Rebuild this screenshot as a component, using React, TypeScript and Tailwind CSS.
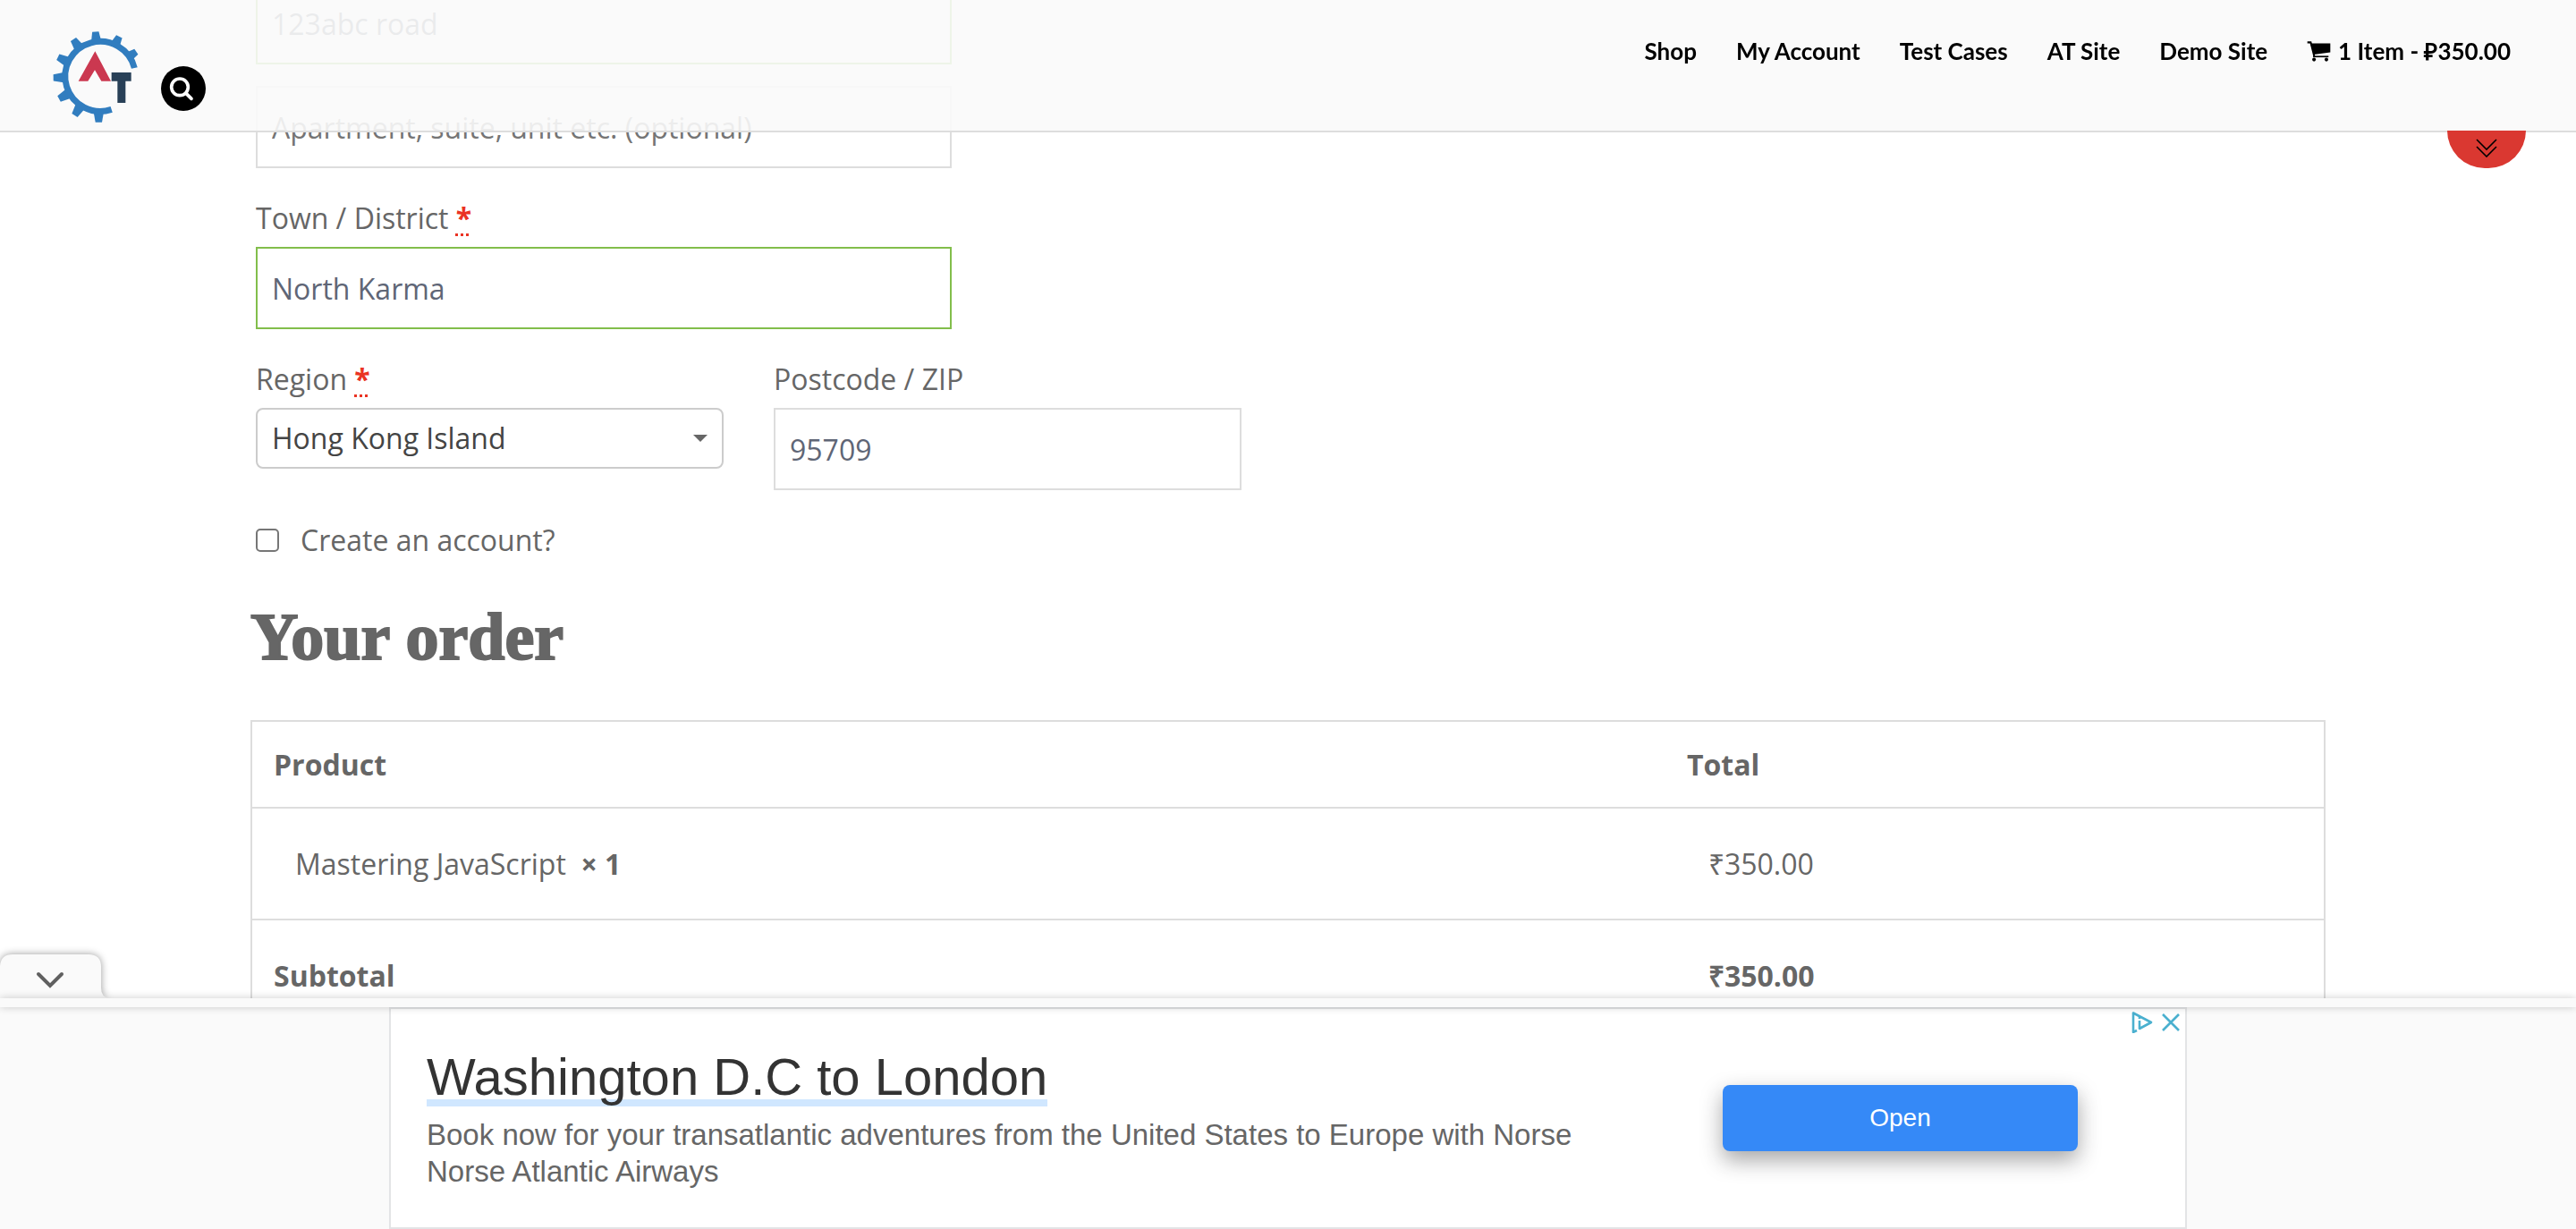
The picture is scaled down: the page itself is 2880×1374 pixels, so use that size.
import React from "react";

const GEAR_TEETH = [-180, -148, -119, -91, -64, -34, -4, 27, 56];

function Logo() {
  return (
    <svg viewBox="25 30 300 306" className="h-[102px] w-[100px]" aria-hidden="true">
      <g fill="#317dbf">
        {GEAR_TEETH.map((angle) => (
          <path
            key={angle}
            transform={`rotate(${angle} 182 183)`}
            d="M171 31h22l6 34h-34z"
          />
        ))}
      </g>
      <path
        d="M302 153A118 117 0 1 0 225 292"
        fill="none"
        stroke="#317dbf"
        strokeWidth="21"
      />
      <path d="M170 97L223 197H191L169 160L146 197H114Z" fill="#cb3850" />
      <path d="M225 168H291V197H272V270H245V197H225Z" fill="#284057" />
    </svg>
  );
}

function CartIcon() {
  return (
    <svg viewBox="32 50 80 68" className="h-[23px] w-[27px]" aria-hidden="true">
      <path d="M34 54H45L57 101" fill="none" stroke="#000" strokeWidth="6" />
      <path d="M45 57H110V87L55 94Z" fill="#000" />
      <path d="M53 101H104" stroke="#000" strokeWidth="5" />
      <circle cx="56" cy="111" r="6" />
      <circle cx="97" cy="111" r="6" />
    </svg>
  );
}

const NAV_LINKS = ["Shop", "My Account", "Test Cases", "AT Site", "Demo Site"];

function Header() {
  return (
    <header className="fixed inset-x-0 top-0 z-20 flex h-[148px] items-start justify-between border-b-2 border-[#dddddd] bg-[#fafafa]/90 pr-[73px] pl-[58px]">
      <div className="flex items-start gap-[22px]">
        <a href="#home" aria-label="Home" className="mt-[35px] block">
          <Logo />
        </a>
        <button
          type="button"
          aria-label="Search"
          className="mt-[74px] flex size-[50px] items-center justify-center rounded-full bg-black"
        >
          <svg viewBox="390 147 150 150" className="size-[50px]" fill="none" stroke="#fff" strokeWidth="11">
            <circle cx="453" cy="217" r="28" />
            <path d="M474 238L492 256" strokeLinecap="round" />
          </svg>
        </button>
      </div>
      <nav className="mt-[37px] flex items-center gap-11 font-['Lato',sans-serif] text-[26px] leading-[40px] font-bold text-black">
        {NAV_LINKS.map((label) => (
          <a key={label} href="#nav">
            {label}
          </a>
        ))}
        <a href="#cart" className="flex items-center gap-2">
          <CartIcon />
          1 Item - ₽350.00
        </a>
      </nav>
    </header>
  );
}

function SubmenuTab() {
  return (
    <button
      type="button"
      aria-label="Show menu"
      className="fixed top-[146px] right-[56px] z-30 flex h-[42px] w-[88px] justify-center rounded-b-full bg-[#da3831] pt-[9px]"
    >
      <svg viewBox="0 0 24 21" className="h-[21px] w-[24px]" fill="none" stroke="#000" strokeWidth="1.6">
        <path d="M1 1L12 12L23 1M1 9L12 20L23 9" />
      </svg>
    </button>
  );
}

function Required() {
  return (
    <abbr
      title="required"
      className="font-bold text-[#ea3323] decoration-dotted decoration-[3px] underline-offset-[5px]"
    >
      *
    </abbr>
  );
}

const FIELD =
  "block h-[92px] w-full border-2 bg-white px-4 text-[32px] text-[#5f6676] outline-none placeholder:text-[#757575]";

function BillingForm() {
  return (
    <form className="flex flex-col gap-6 px-1.5">
      <div className="max-w-[778px]">
        <input aria-label="Street address" defaultValue="123abc road" className={`${FIELD} border-[#82be4b]`} />
      </div>
      <div className="max-w-[778px]">
        <input
          aria-label="Apartment"
          placeholder="Apartment, suite, unit etc. (optional)"
          className={`${FIELD} border-[#dddddd]`}
        />
      </div>
      <div className="max-w-[778px]">
        <label htmlFor="town" className="block leading-[64px]">
          Town / District <Required />
        </label>
        <input id="town" defaultValue="North Karma" className={`${FIELD} border-[#82be4b]`} />
      </div>
      <div className="grid max-w-[1102px] grid-cols-2 gap-14">
        <div>
          <label htmlFor="region" className="block leading-[64px]">
            Region <Required />
          </label>
          <div className="relative">
            <select
              id="region"
              className="block h-[68px] w-full appearance-none rounded-lg border-2 border-[#cccccc] bg-white px-4 text-[32px] text-[#444444]"
            >
              <option>Hong Kong Island</option>
            </select>
            <svg viewBox="0 0 16 8" className="pointer-events-none absolute top-[30px] right-[18px] h-2 w-4" fill="#666">
              <path d="M0 0H16L8 8Z" />
            </svg>
          </div>
        </div>
        <div>
          <label htmlFor="postcode" className="block leading-[64px]">
            Postcode / ZIP
          </label>
          <input id="postcode" defaultValue="95709" className={`${FIELD} border-[#dddddd]`} />
        </div>
      </div>
      <label className="flex items-center gap-6 leading-[64px]">
        <input
          type="checkbox"
          className="size-[26px] appearance-none rounded-[5px] border-2 border-[#767676] bg-white"
        />
        Create an account?
      </label>
    </form>
  );
}

function OrderTable() {
  return (
    <table className="w-full border-collapse border-2 border-[#dddddd] text-left">
      <thead>
        <tr className="h-[97px] border-b-2 border-[#dddddd]">
          <th className="px-6">Product</th>
          <th className="w-[31.8%] px-6">Total</th>
        </tr>
      </thead>
      <tbody>
        <tr className="h-[125px] border-b-2 border-[#dddddd]">
          <td className="px-12">
            Mastering JavaScript&nbsp; <strong>× 1</strong>
          </td>
          <td className="px-12">₹350.00</td>
        </tr>
        <tr className="h-[125px] border-b-2 border-[#dddddd]">
          <th className="px-6">Subtotal</th>
          <td className="px-12 font-bold">₹350.00</td>
        </tr>
      </tbody>
    </table>
  );
}

function AdBanner() {
  return (
    <aside className="fixed inset-x-0 bottom-0 z-20 bg-[#fafafa] font-['Liberation_Sans',Arial,sans-serif]">
      <button
        type="button"
        aria-label="Collapse advertisement"
        className="absolute bottom-full left-0 flex h-[50px] w-[122px] items-start drop-shadow-[0_0_4px_rgba(0,0,0,0.4)]"
      >
        <svg viewBox="0 0 122 50" className="h-[50px] w-[122px]">
          <path d="M0 50V14Q1 1 14 1H99Q113 1 113 15V38Q113 49 122 50Z" fill="#fafafa" />
          <path d="M43 23L56 36L69 23" fill="none" stroke="#606060" strokeWidth="4" strokeLinecap="round" />
        </svg>
      </button>
      <div className="relative h-2.5 bg-[#fafafa] shadow-[0_0_10px_rgba(0,0,0,0.2)]" />
      <div className="mx-auto flex h-[248px] max-w-[2010px] items-start border-2 border-[#e3e4e6] bg-white pl-10">
        <div className="mt-10 w-[1340px]">
          <a href="#offer" className="inline-block bg-[linear-gradient(#d0e7ff,#d0e7ff)] bg-[length:100%_8px] bg-[position:0_61px] bg-no-repeat text-[58px] leading-[72px] text-[#333333]">
            Washington D.C to London
          </a>
          <p className="mt-2 text-[33px] leading-[41px] text-[#666666]">
            Book now for your transatlantic adventures from the United States to Europe with Norse
            <br />
            Norse Atlantic Airways
          </p>
        </div>
        <button
          type="button"
          className="mt-[85px] ml-auto h-[74px] w-[397px] rounded-lg bg-[#3589f7] text-[28px] text-white shadow-[0_10px_24px_rgba(32,33,36,0.4)]"
        >
          Open
        </button>
        <div className="ml-[60px] flex gap-2.5 pt-[3px] pr-1.5">
          <button type="button" aria-label="Ad choices">
            <svg viewBox="0 0 24 24" className="size-6" fill="none" stroke="#4ab0cf" strokeWidth="2.6" strokeLinejoin="round">
              <path d="M6 21L2 23V1.500L22 12L9 19V10M9 6V8" />
            </svg>
          </button>
          <button type="button" aria-label="Close advertisement">
            <svg viewBox="0 0 20 20" className="size-5" fill="none" stroke="#4ab0cf" strokeWidth="2.6">
              <path d="M1 1L19 19M19 1L1 19" />
            </svg>
          </button>
        </div>
      </div>
    </aside>
  );
}

export default function App() {
  return (
    <div className="h-screen overflow-hidden bg-white font-['Open_Sans',sans-serif] text-[32px] text-[#666666]">
      <Header />
      <SubmenuTab />
      <main className="mx-auto -mt-5 max-w-[2320px]">
        <BillingForm />
        <h2 className="mt-9 mb-[53px] font-['Liberation_Serif',serif] text-[74px] leading-[80px] font-bold [-webkit-text-stroke:2px_#666666]">
          Your order
        </h2>
        <OrderTable />
      </main>
      <AdBanner />
    </div>
  );
}
